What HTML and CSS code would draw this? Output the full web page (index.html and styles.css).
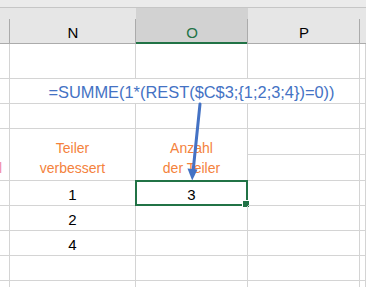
FILE: index.html
```html
<!DOCTYPE html>
<html lang="de">
<head>
<meta charset="utf-8">
<title>Tabelle</title>
<link rel="stylesheet" href="styles.css">
</head>
<body>
<div class="sheet">
  <div class="ribbon-edge"></div>
  <div class="col-heads">
    <div class="ch"></div>
    <div class="ch">N</div>
    <div class="ch ch-active">O</div>
    <div class="ch">P</div>
    <div class="ch ch-last"></div>
  </div>

  <div class="grid">
    <!-- row 1 -->
    <div class="c"></div><div class="c"></div><div class="c"></div><div class="c"></div><div class="c"></div>
    <!-- row 2: formula text spilling across N..P -->
    <div class="c"></div>
    <div class="c formula span3">=SUMME(1*(REST($C$3;{1;2;3;4})=0))</div>
    <div class="c"></div>
    <!-- row 3 -->
    <div class="c"></div><div class="c"></div><div class="c"></div><div class="c"></div><div class="c"></div>
    <!-- rows 4-5 -->
    <div class="c tall clip"><span class="pink">&nbsp;</span><span class="pink">Teil</span></div>
    <div class="c tall head-txt"><span>Teiler</span><span>verbessert</span></div>
    <div class="c tall head-txt"><span>Anzahl</span><span>der Teiler</span></div>
    <div class="c"></div><div class="c"></div>
    <div class="c"></div><div class="c"></div>
    <!-- row 6 -->
    <div class="c"></div>
    <div class="c num">1</div>
    <div class="c num selected">3<span class="sel-box"><span class="fill-handle"></span></span></div>
    <div class="c"></div><div class="c"></div>
    <!-- row 7 -->
    <div class="c"></div><div class="c num">2</div><div class="c"></div><div class="c"></div><div class="c"></div>
    <!-- row 8 -->
    <div class="c"></div><div class="c num">4</div><div class="c"></div><div class="c"></div><div class="c"></div>
    <!-- row 9 -->
    <div class="c"></div><div class="c"></div><div class="c"></div><div class="c"></div><div class="c"></div>
    <!-- row 10 -->
    <div class="c"></div><div class="c"></div><div class="c"></div><div class="c"></div><div class="c"></div>
  </div>

  <svg class="arrow" width="366" height="287" viewBox="0 0 366 287">
    <line x1="200" y1="104" x2="193.2" y2="170" stroke="#4472c4" stroke-width="3" stroke-linecap="round"/>
    <polygon points="187.5,168.5 197.5,169.5 192.2,180.5" fill="#4472c4"/>
  </svg>
</div>
</body>
</html>
```

FILE: styles.css
```css
* { box-sizing: border-box; }

html, body {
  margin: 0;
  padding: 0;
  background: #ffffff;
}

.sheet {
  position: relative;
  width: 366px;
  height: 287px;
  overflow: hidden;
  font-family: "Liberation Sans", Arial, sans-serif;
}

.ribbon-edge {
  height: 8px;
  background: #ebebeb;
  border-bottom: 1px solid #c6c6c6;
}

.col-heads {
  display: grid;
  grid-template-columns: 10px 126px 112px 112px 1fr;
  height: 36px;
  background: #e6e6e6;
}

.ch {
  position: relative;
  display: flex;
  align-items: flex-end;
  justify-content: center;
  padding-bottom: 1px;
  border-bottom: 1px solid #ababab;
  font-size: 15px;
  line-height: 18px;
  color: #000;
}

.ch::after {
  content: "";
  position: absolute;
  right: 0;
  top: 11px;
  bottom: -1px;
  width: 1px;
  background: #ababab;
}

.ch-last::after { display: none; }

.ch-active {
  background: #d2d2d2;
  color: #217346;
  border-bottom-color: #217346;
  box-shadow: inset 0 -1px 0 #217346;
}

.grid {
  display: grid;
  grid-template-columns: 10px 126px 112px 112px 1fr;
  grid-template-rows: 35px 25px 25px 26px 26px 25px 25px 25px 25px 25px;
}

.c {
  position: relative;
  border-right: 1px solid #d4d4d4;
  border-bottom: 1px solid #d4d4d4;
  display: flex;
  align-items: flex-end;
  justify-content: center;
  white-space: nowrap;
}

.span3 { grid-column: span 3; }

.formula {
  color: #4472c4;
  font-size: 16.4px;
  line-height: 19px;
  padding-left: 14px;
  padding-bottom: 1px;
}

.tall {
  grid-row: span 2;
  flex-direction: column;
  align-items: center;
  justify-content: flex-end;
  padding-bottom: 2px;
  font-size: 14px;
  line-height: 20px;
}

.head-txt { color: #f4823c; }

.clip {
  overflow: hidden;
  align-items: flex-end;
  padding-right: 7px;
}

.pink { color: #f08caa; }

.num {
  font-size: 15px;
  line-height: 18px;
  padding-bottom: 1px;
  color: #000;
}

.sel-box {
  position: absolute;
  left: -1px;
  top: -1px;
  right: -1px;
  bottom: -1px;
  border: 2px solid #217346;
}

.fill-handle {
  position: absolute;
  right: -4px;
  bottom: -4px;
  width: 8px;
  height: 8px;
  background: #217346;
  border: 1px solid #ffffff;
}

.arrow {
  position: absolute;
  left: 0;
  top: 0;
  pointer-events: none;
}
```
